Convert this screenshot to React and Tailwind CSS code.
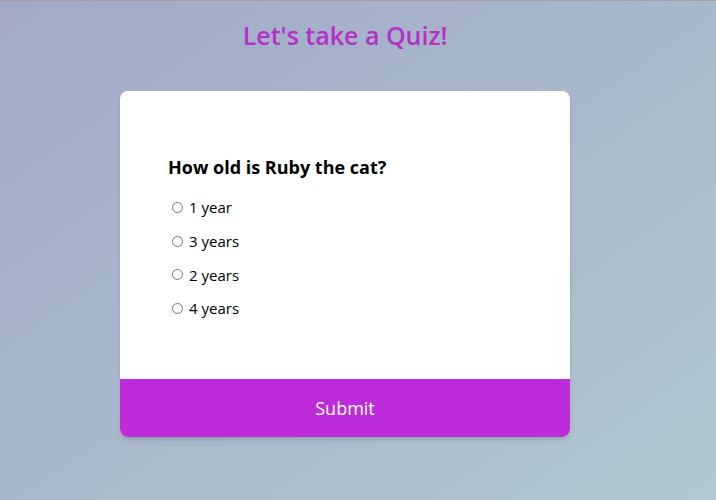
export default function App() {
  const options = ["1 year", "3 years", "2 years", "4 years"];

  return (
    <div
      className="min-h-[500px] w-full border-t border-[#a79ba6] bg-gradient-to-br from-[#a1a9c7] to-[#b0c8cf]"
      style={{ fontFamily: '"Open Sans", "Noto Sans", sans-serif' }}
    >
      <div className="flex w-[690px] flex-col items-center">
        <h1 className="mt-[18px] text-[25px] font-semibold leading-[32px] text-[#b530c8]">
          Let's take a Quiz!
        </h1>

        <div className="mt-[40px] flex w-[450px] flex-col overflow-hidden rounded-lg bg-white shadow-md">
          <div className="px-[48px] pt-[64px] pb-[59px]">
            <h2 className="text-[18px] font-bold leading-[24px] text-black">
              How old is Ruby the cat?
            </h2>
            <ul className="mt-[17px] flex flex-col gap-[10.7px]">
              {options.map((o, i) => (
                <li key={o} className="flex h-[23px] items-center gap-[6px]">
                  <input
                    type="radio"
                    name="answer"
                    id={"opt" + i}
                    className="ml-[4px] h-[11px] w-[11px] accent-[#be2bdb]"
                  />
                  <label htmlFor={"opt" + i} className="text-[15px] text-black">
                    {o}
                  </label>
                </li>
              ))}
            </ul>
          </div>
          <button className="h-[58px] w-full bg-[#be2bdb] text-[18px] text-white">
            Submit
          </button>
        </div>
      </div>
    </div>
  );
}
